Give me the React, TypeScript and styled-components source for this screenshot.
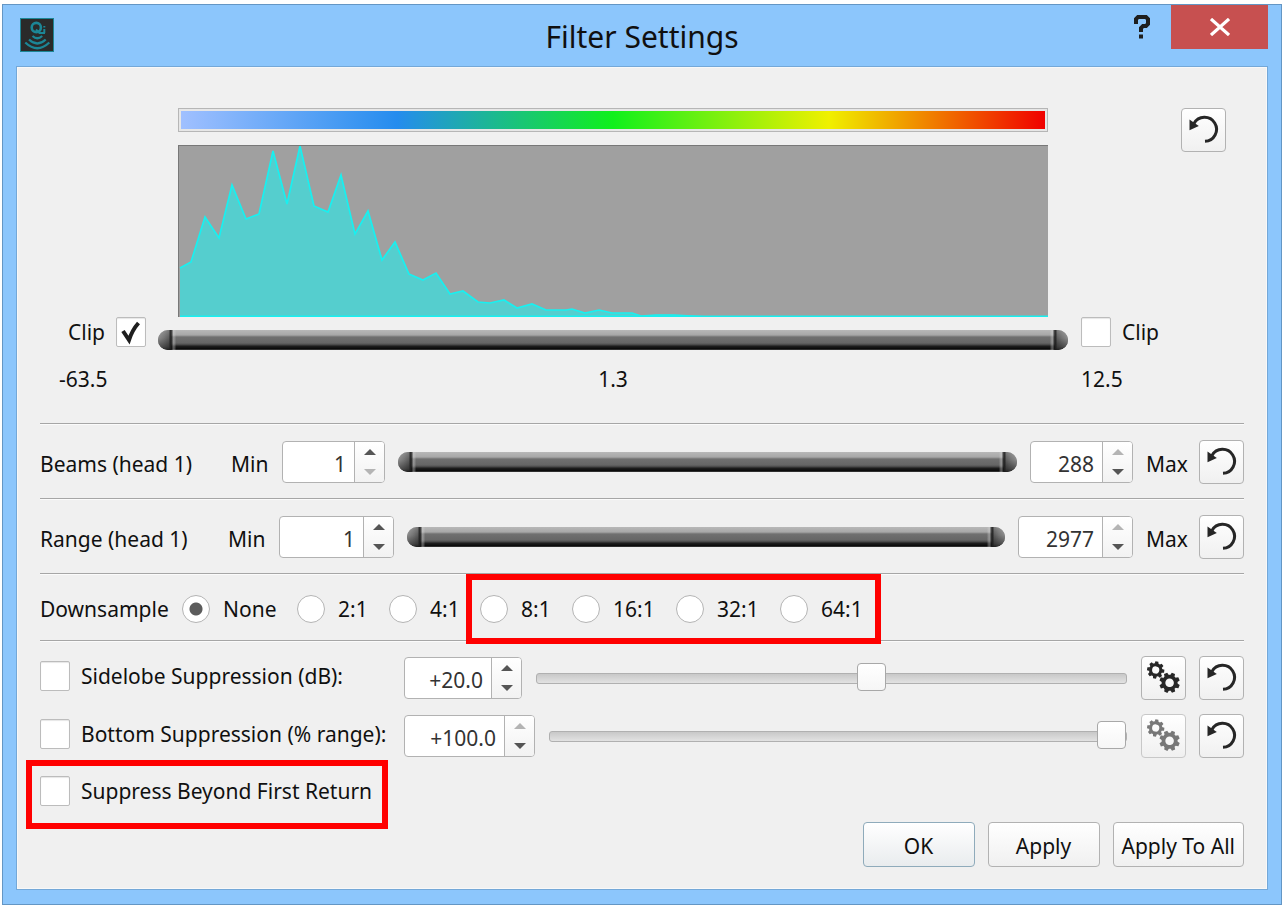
import React from "react";
import styled, { createGlobalStyle, css } from "styled-components";

const GlobalStyle = createGlobalStyle`
  *, *::before, *::after { box-sizing: border-box; }
  body {
    margin: 0;
    background: #ffffff;
    color: #101010;
    font-family: "Noto Sans", "Open Sans", sans-serif;
    font-size: 21px;
    line-height: 30px;
  }
  button, input { font: inherit; color: inherit; margin: 0; }
`;

/* ---------- window frame ---------- */

const Page = styled.div`
  padding: 4px 5px 4px 2px;
`;

const Window = styled.section`
  background: #8cc6fc;
  border: 1px solid #6496c4;
  padding: 0 13px 14px;
`;

const TitleBar = styled.header`
  display: grid;
  grid-template-columns: 1fr auto 1fr;
  align-items: start;
  height: 61px;
`;

const Logo = styled.svg`
  display: block;
  width: 34px;
  height: 34px;
  margin: 13px 0 0 4px;
`;

const Title = styled.h1`
  margin: 12px 0 0;
  font-size: 30px;
  font-weight: 400;
  line-height: 40px;
`;

const WindowActions = styled.div`
  display: flex;
  justify-content: flex-end;
`;

const HelpButton = styled.button`
  width: 58px;
  height: 44px;
  padding: 0;
  border: 0;
  background: transparent;
  display: grid;
  place-items: center;
`;

const CloseButton = styled.button`
  width: 97px;
  height: 44px;
  padding: 0;
  border: 0;
  background: #c75050;
  display: grid;
  place-items: center;
`;

const Client = styled.form`
  background: #f0f0f0;
  border: 1px solid #74a8d8;
  box-shadow: inset 0 0 0 1px #f8f8f8;
  padding: 41px 23px 22px;
`;

/* ---------- shared parts ---------- */

const buttonFace = css`
  background: linear-gradient(#ffffff, #f0f0f0);
  border: 1px solid #b2b2b2;
  border-radius: 4px;
`;

const IconButton = styled.button`
  ${buttonFace}
  flex: none;
  width: 45px;
  height: 44px;
  padding: 0;
  color: #262626;
  display: grid;
  place-items: center;
  &:disabled { border-color: #c8c8c8; color: #777777; }
`;

const Divider = styled.hr`
  margin: 0;
  border: 0;
  height: 2px;
  background: linear-gradient(#a6a6a6 50%, #fbfbfb 50%);
`;

const CheckField = styled.label`
  display: inline-flex;
  align-items: center;
  gap: 11px;
  white-space: nowrap;
`;

const CheckFrame = styled.span`
  position: relative;
  flex: none;
  width: 30px;
  height: 30px;
  svg {
    position: absolute;
    inset: 0;
    pointer-events: none;
    visibility: hidden;
  }
  input:checked + svg { visibility: visible; }
`;

const CheckInput = styled.input`
  appearance: none;
  display: block;
  width: 30px;
  height: 30px;
  background: #ffffff;
  border: 1px solid #bcbcbc;
  border-radius: 2px;
  box-shadow: inset 0 1px 1px #e6e6e6;
`;

function CheckBox({ checked }: { checked?: boolean }) {
  return (
    <CheckFrame>
      <CheckInput type="checkbox" defaultChecked={checked} />
      <svg width="30" height="30" viewBox="0 0 30 30" fill="none" stroke="#1e1e1e" strokeWidth="4">
        <path d="M7 14 L13 23 C15 17 18 11 22.500 6" />
      </svg>
    </CheckFrame>
  );
}

const SpinFrame = styled.div<{ $width: number }>`
  flex: none;
  display: flex;
  width: ${(p) => p.$width}px;
  height: 42px;
  background: #ffffff;
  border: 1px solid #b2b2b2;
  border-radius: 4px;
  overflow: hidden;
`;

const SpinInput = styled.input`
  flex: 1;
  min-width: 0;
  padding: 4px 8px 0 0;
  border: 0;
  outline: 0;
  background: transparent;
  color: #333333;
  text-align: right;
`;

const SpinArrows = styled.div`
  width: 30px;
  display: flex;
  flex-direction: column;
  border-left: 1px solid #b2b2b2;
  background: linear-gradient(#ffffff, #f2f2f2);
`;

const SpinArrow = styled.button`
  flex: 1;
  padding: 0;
  border: 0;
  background: transparent;
  color: #555555;
  display: grid;
  place-items: center;
  &:disabled { color: #b4b4b4; }
`;

interface SpinProps {
  label: string;
  value: string;
  width: number;
  upOff?: boolean;
  downOff?: boolean;
}

function SpinBox({ label, value, width, upOff, downOff }: SpinProps) {
  return (
    <SpinFrame $width={width}>
      <SpinInput type="text" aria-label={label} defaultValue={value} />
      <SpinArrows>
        <SpinArrow type="button" aria-label={`Increase ${label}`} disabled={upOff}>
          <svg width="12" height="6" viewBox="0 0 12 6"><path d="M0 6 L6 0 L12 6Z" fill="currentColor" /></svg>
        </SpinArrow>
        <SpinArrow type="button" aria-label={`Decrease ${label}`} disabled={downOff}>
          <svg width="12" height="6" viewBox="0 0 12 6"><path d="M0 0 L12 0 L6 6Z" fill="currentColor" /></svg>
        </SpinArrow>
      </SpinArrows>
    </SpinFrame>
  );
}

/* A metal rod with a draggable cap at each end */
const Rod = styled.div`
  position: relative;
  flex: 1;
  min-width: 0;
  height: 20px;
  border-radius: 10px;
  background: linear-gradient(
    #b8b8b8 0, #a8a8a8 5px, #707070 7px, #666666 13px, #444444 15px, #202020 16px, #080808 19px, #555555 20px
  );
`;

const capShape = css<{ $end: "left" | "right" }>`
  appearance: none;
  width: 18px;
  height: 20px;
  border: 0;
  pointer-events: auto;
  border-radius: ${(p) => (p.$end === "left" ? "10px 0 0 10px" : "0 10px 10px 0")};
  background:
    linear-gradient(
      ${(p) => (p.$end === "left" ? "90deg" : "270deg")},
      transparent 0, transparent 11px, #1a1a1abb 12px, #1a1a1abb 14px, #d8d8d866 15px, #d8d8d844 17px, transparent 18px
    ),
    linear-gradient(#ffffff33 0, transparent 8px, #00000066 17px, #000000aa 20px)
      ${(p) => p.$end} / 13px 20px no-repeat,
    linear-gradient(${(p) => (p.$end === "left" ? "90deg" : "270deg")}, #8c8c8c 0, #747474 6px, #505050 13px)
      ${(p) => p.$end} / 13px 20px no-repeat;
`;

const RodInput = styled.input<{ $end: "left" | "right" }>`
  appearance: none;
  position: absolute;
  inset: 0;
  width: 100%;
  height: 20px;
  background: transparent;
  pointer-events: none;
  &::-webkit-slider-thumb { ${capShape} }
`;

function RodSlider({ label }: { label: string }) {
  return (
    <Rod>
      <RodInput type="range" $end="left" aria-label={`${label} minimum`} min={0} max={100} defaultValue={0} />
      <RodInput type="range" $end="right" aria-label={`${label} maximum`} min={0} max={100} defaultValue={100} />
    </Rod>
  );
}

const LevelSlider = styled.input`
  appearance: none;
  flex: 1;
  min-width: 0;
  height: 30px;
  background: transparent;
  &::-webkit-slider-runnable-track {
    height: 11px;
    border: 1px solid #b0b0b0;
    border-radius: 3px;
    background: linear-gradient(#c8c8c8, #e2e2e2);
  }
  &::-webkit-slider-thumb {
    appearance: none;
    position: relative;
    width: 29px;
    height: 28px;
    margin-top: -11px;
    border: 1px solid #a8a8a8;
    border-radius: 4px;
    background: linear-gradient(#ffffff, #f6f6f6);
  }
`;

/* ---------- icons ---------- */

function ResetIcon() {
  return (
    <svg width="43" height="42" viewBox="1 1 43 42" fill="none">
      <path d="M13 15.500 A12 12 0 1 1 24 33.300" stroke="currentColor" strokeWidth="3" />
      <path d="M8.500 11.500 L17.800 18 L8.500 22.300Z" fill="currentColor" />
    </svg>
  );
}

function Gear({ x, y, size, turn }: { x: number; y: number; size: number; turn: number }) {
  return (
    <g transform={`translate(${x} ${y}) rotate(${turn}) scale(${size})`}>
      <circle r="6" fill="none" stroke="currentColor" strokeWidth="3.600" />
      {[0, 45, 90, 135, 180, 225, 270, 315].map((a) => (
        <path key={a} d="M-2.300 -7 L-1.700 -10 L1.700 -10 L2.300 -7Z" fill="currentColor" transform={`rotate(${a})`} />
      ))}
    </g>
  );
}

function GearsIcon() {
  return (
    <svg width="43" height="42" viewBox="1 1 43 42">
      <Gear x={14.7} y={14} size={0.86} turn={8} />
      <Gear x={28.6} y={26.8} size={1.02} turn={22} />
    </svg>
  );
}

function AppLogo() {
  return (
    <Logo viewBox="0 0 34 34" fill="none" stroke="#1c8696" strokeWidth="2.200">
      <rect x="0.500" y="0.500" width="33" height="33" fill="#2a2a2a" strokeWidth="1" />
      <ellipse cx="16.300" cy="9.500" rx="4.600" ry="4.600" strokeWidth="2.600" />
      <path d="M16 11.500 L19.500 15 H25 M24.300 15 V11 M24.300 9.500 V8" strokeWidth="2" />
      <path d="M12.500 18 Q17.300 22.500 22.200 18" />
      <path d="M9 21.500 Q17.300 29.500 25.700 21.500" />
      <path d="M5.300 24.500 Q17.300 36 29.300 24.500" />
    </Logo>
  );
}

/* ---------- intensity section ---------- */

const Intensity = styled.div`
  display: grid;
  grid-template-columns: 118px 1fr 176px;
  margin-bottom: 29px;
`;

const Plot = styled.div`
  grid-column: 2;
  padding: 0 20px;
`;

const PlotActions = styled.div`
  padding-left: 113px;
`;

const ColorScale = styled.div`
  height: 24px;
  margin-bottom: 13px;
  padding: 2px;
  border: 1px solid #b6b6b6;
  background:
    linear-gradient(90deg, #a0c0ff, #258cee 25%, #10f01c 50%, #f0f000 75%, #f00000) content-box,
    #e6e6e6;
`;

const Histogram = styled.svg`
  display: block;
  width: 100%;
  height: 172px;
  background: #a0a0a0;
  border: solid #787878;
  border-width: 1px 0 0 1px;
`;

const histogram =
  "1,122 12,116 26,71 40,92 53,39 67,73 80,68 94,5 108,58 121,0 135,60 149,66 162,29 176,88 189,65 203,114 216,96 " +
  "230,128 244,134 257,127 271,148 284,145 299,156 311,157 325,154 338,162 353,158 367,164 387,164 393,163 406,167 " +
  "420,164 433,167 453,167 462,170 477,169 495,169 513,170 530,171 869,171";

const LeftClip = styled.div`
  display: flex;
  align-items: flex-start;
  justify-content: flex-end;
  padding-right: 12px;
`;

const RightClip = styled.div`
  padding-left: 13px;
`;

const RodCell = styled.div`
  display: flex;
  align-items: flex-end;
  height: 33px;
`;

const Reading = styled.output<{ $inset?: number; $center?: boolean }>`
  margin-top: 10px;
  padding-left: ${(p) => p.$inset ?? 0}px;
  text-align: ${(p) => (p.$center ? "center" : "left")};
`;

/* ---------- limit rows ---------- */

const LimitRow = styled.div`
  display: flex;
  align-items: center;
  gap: 13px;
  height: 73px;
`;

const Caption = styled.span<{ $width?: number }>`
  flex: none;
  width: ${(p) => (p.$width ? `${p.$width}px` : "auto")};
  padding-top: 5px;
  white-space: nowrap;
`;

/* ---------- downsample row ---------- */

const Downsample = styled.div`
  display: flex;
  align-items: center;
  height: 65px;
  padding-top: 3px;
`;

const RadioField = styled.label<{ $width: number }>`
  display: inline-flex;
  align-items: center;
  gap: 13px;
  width: ${(p) => p.$width}px;
  white-space: nowrap;
`;

const RadioInput = styled.input`
  appearance: none;
  flex: none;
  width: 28px;
  height: 28px;
  border: 1px solid #b4b4b4;
  border-radius: 50%;
  background: #ffffff;
  &:checked { background: radial-gradient(circle, #5c5c5c 6px, #ffffff 7px); }
`;

/* Red call-out frame laid over the options it surrounds */
const Highlight = styled.div<{ $frame: string }>`
  position: relative;
  display: flex;
  width: fit-content;
  &::after {
    content: "";
    position: absolute;
    z-index: 1;
    inset: ${(p) => p.$frame};
    border: 6px solid #ff0000;
    pointer-events: none;
  }
`;

function RatioOption({ text, width, checked }: { text: string; width: number; checked?: boolean }) {
  return (
    <RadioField $width={width}>
      <RadioInput type="radio" name="downsample" defaultChecked={checked} />
      <span>{text}</span>
    </RadioField>
  );
}

/* ---------- suppression rows ---------- */

const Suppression = styled.div`
  display: flex;
  flex-direction: column;
  gap: 14px;
  padding-top: 14px;
`;

const SuppressionRow = styled.div`
  display: grid;
  grid-template-columns: 364px 1fr auto auto;
  align-items: center;
  height: 44px;
  > label { margin-bottom: 5px; }
  > button { margin-left: 14px; }
  > button + button { margin-left: 13px; }
`;

const LevelGroup = styled.div`
  display: flex;
  align-items: center;
  gap: 14px;
`;

const FirstReturn = styled.div`
  padding-top: 4px;
`;

const Footer = styled.footer`
  display: flex;
  justify-content: flex-end;
  gap: 13px;
  margin-top: 16px;
`;

const PushButton = styled.button<{ $primary?: boolean }>`
  ${buttonFace}
  min-width: 112px;
  height: 45px;
  padding: 3px 8px 0;
  white-space: nowrap;
  ${(p) =>
    p.$primary &&
    css`
      border-color: #8fabbb;
      background: linear-gradient(#ffffff, #e9ecee);
    `}
`;

function Reset({ label }: { label: string }) {
  return (
    <IconButton type="button" aria-label={`Reset ${label}`}>
      <ResetIcon />
    </IconButton>
  );
}

export default function App() {
  return (
    <Page>
      <GlobalStyle />
      <Window>
        <TitleBar>
          <AppLogo />
          <Title>Filter Settings</Title>
          <WindowActions>
            <HelpButton type="button" aria-label="Help">
              <svg width="16" height="24" viewBox="0 0 16 24" fill="none" stroke="#1e1e1e" strokeWidth="4">
                <path d="M2 9 V4 L4 2 H12 L14 4 V9 L12 11 H9 L7 13 V17 M5 21.500 H9" />
              </svg>
            </HelpButton>
            <CloseButton type="button" aria-label="Close">
              <svg width="20" height="18" viewBox="0 0 20 18" stroke="#ffffff" strokeWidth="3.200">
                <path d="M1 1 L19 17 M19 1 L1 17" />
              </svg>
            </CloseButton>
          </WindowActions>
        </TitleBar>

        <Client onSubmit={(e: React.FormEvent) => e.preventDefault()}>
          <Intensity>
            <Plot>
              <ColorScale />
              <Histogram viewBox="0 0 869 171" preserveAspectRatio="none">
                <polygon points={`1,171 ${histogram}`} fill="#55cece" />
                <polyline points={histogram} fill="none" stroke="#18f0f0" strokeWidth="1.700" />
                <path d="M1 170.300 H869" stroke="#18f0f0" strokeWidth="1.500" />
              </Histogram>
            </Plot>
            <PlotActions>
              <Reset label="intensity" />
            </PlotActions>

            <LeftClip>
              <CheckField>
                <span>Clip</span>
                <CheckBox checked />
              </CheckField>
            </LeftClip>
            <RodCell>
              <RodSlider label="Intensity" />
            </RodCell>
            <RightClip>
              <CheckField>
                <CheckBox />
                <span>Clip</span>
              </CheckField>
            </RightClip>

            <Reading $inset={19}>-63.5</Reading>
            <Reading $center>1.3</Reading>
            <Reading $inset={13}>12.5</Reading>
          </Intensity>

          <Divider />
          <LimitRow>
            <Caption $width={178}>Beams (head 1)</Caption>
            <Caption $width={38}>Min</Caption>
            <SpinBox label="first beam" value="1" width={103} downOff />
            <RodSlider label="Beams" />
            <SpinBox label="last beam" value="288" width={103} upOff />
            <Caption $width={40}>Max</Caption>
            <Reset label="beams" />
          </LimitRow>

          <Divider />
          <LimitRow>
            <Caption $width={175}>Range (head 1)</Caption>
            <Caption $width={38}>Min</Caption>
            <SpinBox label="range start" value="1" width={115} />
            <RodSlider label="Range" />
            <SpinBox label="range end" value="2977" width={115} upOff />
            <Caption $width={40}>Max</Caption>
            <Reset label="range" />
          </LimitRow>

          <Divider />
          <Downsample role="radiogroup" aria-label="Downsample">
            <RadioField as="span" $width={142}>Downsample</RadioField>
            <RatioOption text="None" width={115} checked />
            <RatioOption text="2:1" width={92} />
            <RatioOption text="4:1" width={91} />
            <Highlight $frame="-20px -19px -20px -14px">
              <RatioOption text="8:1" width={92} />
              <RatioOption text="16:1" width={104} />
              <RatioOption text="32:1" width={104} />
              <RatioOption text="64:1" width={82} />
            </Highlight>
          </Downsample>

          <Divider />
          <Suppression>
            <SuppressionRow>
              <CheckField>
                <CheckBox />
                <span>Sidelobe Suppression (dB):</span>
              </CheckField>
              <LevelGroup>
                <SpinBox label="sidelobe suppression" value="+20.0" width={118} />
                <LevelSlider type="range" aria-label="Sidelobe suppression level" min={0} max={35} defaultValue={20} />
              </LevelGroup>
              <IconButton type="button" aria-label="Sidelobe options">
                <GearsIcon />
              </IconButton>
              <Reset label="sidelobe suppression" />
            </SuppressionRow>
            <SuppressionRow>
              <CheckField>
                <CheckBox />
                <span>Bottom Suppression (% range):</span>
              </CheckField>
              <LevelGroup>
                <SpinBox label="bottom suppression" value="+100.0" width={131} upOff />
                <LevelSlider type="range" aria-label="Bottom suppression level" min={0} max={100} defaultValue={100} />
              </LevelGroup>
              <IconButton type="button" aria-label="Bottom options" disabled>
                <GearsIcon />
              </IconButton>
              <Reset label="bottom suppression" />
            </SuppressionRow>
            <FirstReturn>
              <Highlight $frame="-16px -16px -23px -14px">
                <CheckField>
                  <CheckBox />
                  <span>Suppress Beyond First Return</span>
                </CheckField>
              </Highlight>
            </FirstReturn>
          </Suppression>

          <Footer>
            <PushButton type="submit" $primary>OK</PushButton>
            <PushButton type="button">Apply</PushButton>
            <PushButton type="button">Apply To All</PushButton>
          </Footer>
        </Client>
      </Window>
    </Page>
  );
}
